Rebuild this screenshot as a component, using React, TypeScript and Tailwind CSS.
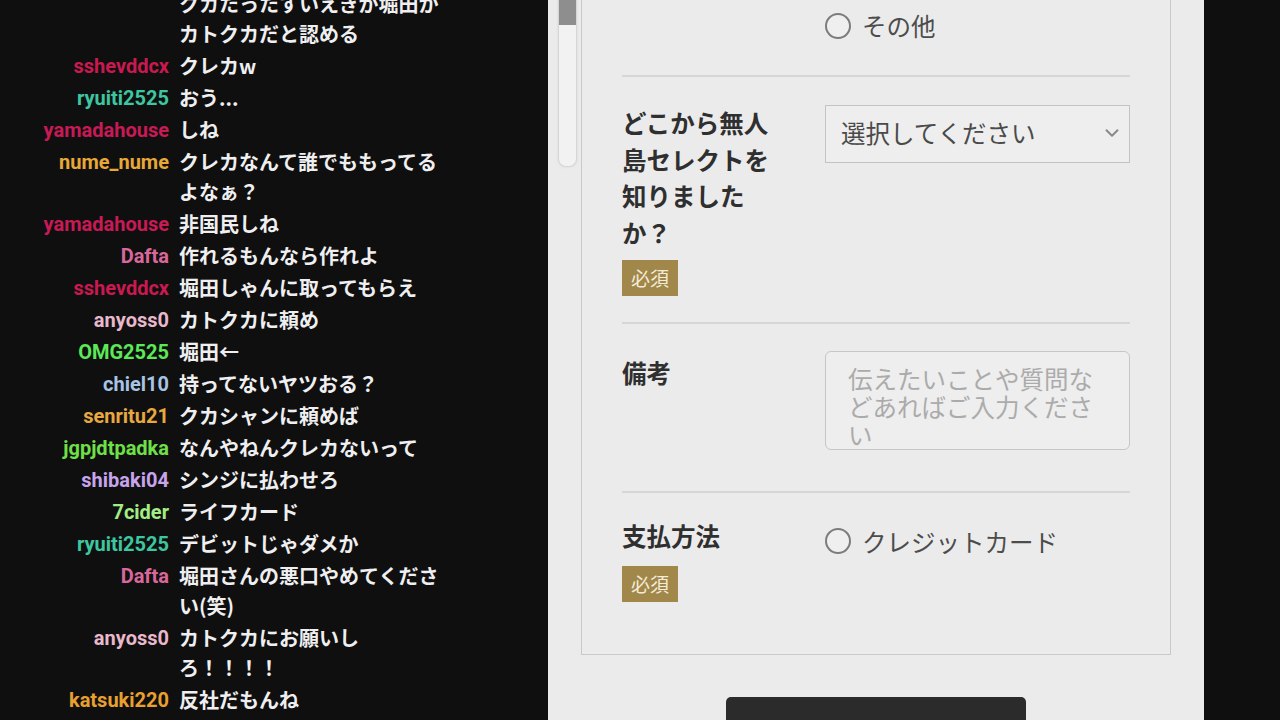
import React from "react";

type Msg = { user: string; color: string; text: string };

const msgs: Msg[] = [
  { user: "", color: "#ffffff", text: "クカたったすいえきが堀田かカトクカだと認める" },
  { user: "sshevddcx", color: "#c81a50", text: "クレカw" },
  { user: "ryuiti2525", color: "#3dc6a0", text: "おう..." },
  { user: "yamadahouse", color: "#c81a55", text: "しね" },
  { user: "nume_nume", color: "#e8a838", text: "クレカなんて誰でももってるよなぁ？" },
  { user: "yamadahouse", color: "#c81a55", text: "非国民しね" },
  { user: "Dafta", color: "#d8689a", text: "作れるもんなら作れよ" },
  { user: "sshevddcx", color: "#c81a50", text: "堀田しゃんに取ってもらえ" },
  { user: "anyoss0", color: "#e8b8cc", text: "カトクカに頼め" },
  { user: "OMG2525", color: "#5ce858", text: "堀田←" },
  { user: "chiel10", color: "#a8c4e4", text: "持ってないヤツおる？" },
  { user: "senritu21", color: "#e8a840", text: "クカシャンに頼めば" },
  { user: "jgpjdtpadka", color: "#70e048", text: "なんやねんクレカないって" },
  { user: "shibaki04", color: "#c8a4ec", text: "シンジに払わせろ" },
  { user: "7cider", color: "#a4ec84", text: "ライフカード" },
  { user: "ryuiti2525", color: "#3dc6a0", text: "デビットじゃダメか" },
  { user: "Dafta", color: "#d8689a", text: "堀田さんの悪口やめてください(笑)" },
  { user: "anyoss0", color: "#e8b8cc", text: "カトクカにお願いしろ！！！！" },
  { user: "katsuki220", color: "#e8a030", text: "反社だもんね" },
];

const cjk = { fontFamily: '"Noto Sans CJK JP", "Noto Sans", sans-serif' };

function Radio({ label }: { label: string }) {
  return (
    <div className="flex items-center gap-[11px]">
      <div className="w-[26px] h-[26px] rounded-full border-2 border-[#7c7c7c] bg-[#efefef] shrink-0" />
      <span className="text-[24.5px] leading-[37px] text-[#4c4c4c]" style={cjk}>
        {label}
      </span>
    </div>
  );
}

function Badge() {
  return (
    <div
      className="w-[56px] h-[36px] bg-[#a1884a] text-[#f3ecd8] text-[19px] flex items-center justify-center"
      style={cjk}
    >
      必須
    </div>
  );
}

export default function App() {
  return (
    <div className="w-[1280px] h-[720px] bg-[#0f0f0f] flex overflow-hidden">
      {/* chat */}
      <div className="w-[548px] h-[720px] flex flex-col justify-end gap-[2px] pb-[5px] overflow-hidden">
        {msgs.map((m, i) => (
          <div key={i} className="flex shrink-0">
            <div
              className="w-[169px] text-right text-[20px] leading-[30px] font-bold shrink-0"
              style={{ color: m.color, fontFamily: 'Roboto, "Liberation Sans", sans-serif' }}
            >
              {m.user}
            </div>
            <div
              className="ml-[10px] w-[265px] text-[20px] leading-[30px] font-bold text-[#efeff1]"
              style={cjk}
            >
              {m.text}
            </div>
          </div>
        ))}
      </div>

      {/* form panel */}
      <div className="relative w-[656px] h-[720px] bg-[#ebebeb] flex flex-col items-center overflow-hidden">
        {/* scrollbar */}
        <div className="absolute left-[10px] top-0 w-[19px] h-[167px] rounded-b-[8px] bg-[#f2f2f2] border border-t-0 border-[#d6d6d6] shadow-[0_0_3px_rgba(0,0,0,0.08)]">
          <div className="absolute left-0 right-0 top-0 h-[25px] bg-[#8e8e8e]" />
        </div>

        <div className="w-[590px] border border-t-0 border-[#c9c9c9] px-[40px] pb-[52px]">
          {/* section 1 */}
          <div className="flex pt-[7px] pb-[31px]">
            <div className="w-[203px] shrink-0" />
            <Radio label="その他" />
          </div>
          <div className="h-[2px] bg-[#d6d6d6]" />

          {/* section 2 */}
          <div className="flex pt-[28px] pb-[26px]">
            <div className="w-[203px] shrink-0">
              <div
                className="w-[160px] text-[24.5px] leading-[36.7px] font-bold text-[#2f2f2f]"
                style={cjk}
              >
                どこから無人島セレクトを知りましたか？
              </div>
              <div className="mt-[8px]">
                <Badge />
              </div>
            </div>
            <div className="w-[305px] h-[58px] border border-[#c3c3c3] bg-[#eeeeee] flex items-center pl-[15px] pr-[6px]">
              <span className="flex-1 text-[24.5px] text-[#4a4a4a] -mt-[2px]" style={cjk}>
                選択してください
              </span>
              <svg width="22" height="22" viewBox="0 0 24 24" fill="none" stroke="#8a8a8a" strokeWidth="2.2" strokeLinecap="round" strokeLinejoin="round" className="-mt-[2px]">
                <path d="M6 9l6 6 6-6" />
              </svg>
            </div>
          </div>
          <div className="h-[2px] bg-[#d6d6d6]" />

          {/* section 3 */}
          <div className="flex pt-[27px] pb-[41px]">
            <div className="w-[203px] shrink-0 pt-[3px]">
              <div className="text-[24.5px] leading-[37px] font-bold text-[#2f2f2f]" style={cjk}>
                備考
              </div>
            </div>
            <div
              className="w-[305px] h-[99px] rounded-[6px] border border-[#c6c6c6] bg-[#eeeeee] pl-[22px] pr-[20px] pt-[13px] text-[24.5px] leading-[28px] text-[#ababab]"
              style={cjk}
            >
              伝えたいことや質問などあればご入力ください
            </div>
          </div>
          <div className="h-[2px] bg-[#d6d6d6]" />

          {/* section 4 */}
          <div className="flex pt-[24px]">
            <div className="w-[203px] shrink-0">
              <div className="text-[24.5px] leading-[37px] font-bold text-[#2f2f2f]" style={cjk}>
                支払方法
              </div>
              <div className="mt-[12px]">
                <Badge />
              </div>
            </div>
            <div className="mt-[6px]">
              <Radio label="クレジットカード" />
            </div>
          </div>
        </div>

        <div className="mt-[42px] w-[300px] h-[60px] shrink-0 rounded-t-[5px] bg-[#2b2b2b]" />
      </div>
    </div>
  );
}
